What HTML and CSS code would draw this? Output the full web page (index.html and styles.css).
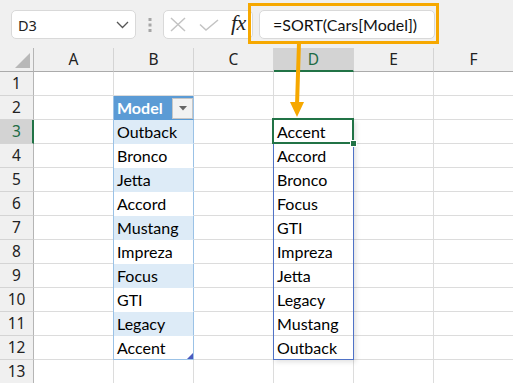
FILE: index.html
```html
<!DOCTYPE html>
<html>
<head>
<meta charset="utf-8">
<link rel="stylesheet" href="styles.css">
</head>
<body>
<div class="topbar">
  <div class="namebox">
    <span class="nb-text">D3</span>
    <svg class="chev" width="13" height="8" viewBox="0 0 13 8"><polyline points="1,1 6.5,6.5 12,1" fill="none" stroke="#555" stroke-width="1.3"/></svg>
  </div>
  <div class="sep">
    <svg width="4" height="16" viewBox="0 0 4 16"><rect x="0.5" y="1" width="3" height="3" fill="#a6a6a6"/><rect x="0.5" y="6.5" width="3" height="3" fill="#a6a6a6"/><rect x="0.5" y="12" width="3" height="3" fill="#a6a6a6"/></svg>
  </div>
  <div class="fbtns">
    <svg class="ico-x" width="16" height="15" viewBox="0 0 16 15"><path d="M1 1 L15 14 M15 1 L1 14" stroke="#c3c3c3" stroke-width="1.5" fill="none"/></svg>
    <svg class="ico-ok" width="20" height="12" viewBox="0 0 20 12"><path d="M1 5.5 L7 11 L19 1" stroke="#c3c3c3" stroke-width="1.5" fill="none"/></svg>
    <span class="fx">fx</span>
  </div>
  <div class="finput">=SORT(Cars[Model])</div>
  <div class="callout"></div>
</div>
<svg class="arrow" width="20" height="76" viewBox="0 0 20 76"><path d="M11 0 L9 62" stroke="#f6a800" stroke-width="4" fill="none"/><polygon points="2,59 16,59 9,74" fill="#f6a800"/></svg>

<div class="sheet">
  <div class="corner"><span class="tri"></span></div>
  <div class="ch">A</div><div class="ch">B</div><div class="ch">C</div><div class="ch sel">D</div><div class="ch">E</div><div class="ch">F</div>

  <div class="rh">1</div><div class="c"></div><div class="c"></div><div class="c"></div><div class="c"></div><div class="c"></div><div class="c"></div>
  <div class="rh">2</div><div class="c"></div><div class="c th"><span>Model</span><span class="dd"><svg width="8" height="5" viewBox="0 0 8 5"><polygon points="0,0 8,0 4,4.5" fill="#666"/></svg></span></div><div class="c"></div><div class="c"></div><div class="c"></div><div class="c"></div>
  <div class="rh sel">3</div><div class="c"></div><div class="c tb band">Outback</div><div class="c"></div><div class="c sp">Accent</div><div class="c"></div><div class="c"></div>
  <div class="rh">4</div><div class="c"></div><div class="c tb">Bronco</div><div class="c"></div><div class="c sp">Accord</div><div class="c"></div><div class="c"></div>
  <div class="rh">5</div><div class="c"></div><div class="c tb band">Jetta</div><div class="c"></div><div class="c sp">Bronco</div><div class="c"></div><div class="c"></div>
  <div class="rh">6</div><div class="c"></div><div class="c tb">Accord</div><div class="c"></div><div class="c sp">Focus</div><div class="c"></div><div class="c"></div>
  <div class="rh">7</div><div class="c"></div><div class="c tb band">Mustang</div><div class="c"></div><div class="c sp">GTI</div><div class="c"></div><div class="c"></div>
  <div class="rh">8</div><div class="c"></div><div class="c tb">Impreza</div><div class="c"></div><div class="c sp">Impreza</div><div class="c"></div><div class="c"></div>
  <div class="rh">9</div><div class="c"></div><div class="c tb band">Focus</div><div class="c"></div><div class="c sp">Jetta</div><div class="c"></div><div class="c"></div>
  <div class="rh">10</div><div class="c"></div><div class="c tb">GTI</div><div class="c"></div><div class="c sp">Legacy</div><div class="c"></div><div class="c"></div>
  <div class="rh">11</div><div class="c"></div><div class="c tb band">Legacy</div><div class="c"></div><div class="c sp">Mustang</div><div class="c"></div><div class="c"></div>
  <div class="rh">12</div><div class="c"></div><div class="c tb last">Accent</div><div class="c"></div><div class="c sp">Outback</div><div class="c"></div><div class="c"></div>
  <div class="rh">13</div><div class="c"></div><div class="c"></div><div class="c"></div><div class="c"></div><div class="c"></div><div class="c"></div>

  <div class="spill"></div>
  <div class="active"><span class="handle"></span></div>
</div>
</body>
</html>
```

FILE: styles.css
```css
* { box-sizing: border-box; }
html, body { margin: 0; padding: 0; }
body {
  width: 513px;
  height: 383px;
  overflow: hidden;
  background: #f0f0f0;
  position: relative;
  font-family: Lato, "Liberation Sans", sans-serif;
}

.topbar {
  height: 48px;
  display: flex;
  align-items: flex-start;
  padding: 10px 0 0 11px;
  position: relative;
}
.namebox {
  width: 125px;
  height: 29px;
  background: #fff;
  border: 1px solid #d9d9d9;
  border-radius: 5px;
  display: flex;
  align-items: center;
  justify-content: space-between;
  padding: 0 6px 0 6px;
  font-family: "Noto Sans", sans-serif;
  font-size: 14.5px;
  color: #222;
}
.chev { margin-top: 1px; }
.sep {
  width: 27px;
  height: 29px;
  display: flex;
  align-items: center;
  justify-content: center;
}
.fbtns {
  width: 90px;
  height: 29px;
  background: #fff;
  border: 1px solid #d9d9d9;
  border-radius: 5px;
  display: flex;
  align-items: center;
  padding-left: 6px;
}
.ico-x { margin-right: 13px; }
.ico-ok { margin-right: 12px; margin-top: 1px; }
.fx {
  font-family: "Liberation Serif", serif;
  font-style: italic;
  font-size: 22px;
  color: #222;
  letter-spacing: -0.5px;
  margin-top: -3px;
}
.finput {
  margin-left: 6px;
  width: 176px;
  height: 29px;
  background: #fff;
  border: 1px solid #d9d9d9;
  border-radius: 5px;
  padding-left: 13px;
  font-size: 16px;
  line-height: 27px;
  color: #111;
  white-space: nowrap;
}
.callout {
  position: absolute;
  left: 248px;
  top: 3px;
  width: 191px;
  height: 41px;
  border: 3px solid #f6a800;
}
.arrow {
  position: absolute;
  left: 288px;
  top: 43px;
  z-index: 5;
}

.sheet {
  display: grid;
  grid-template-columns: 34px repeat(6, 80px);
  grid-auto-rows: 24px;
  width: 514px;
  position: relative;
}
.corner {
  background: #f0f0f0;
  border-right: 1px solid #b5b5b5;
  border-bottom: 1px solid #ababab;
  position: relative;
}
.tri {
  position: absolute;
  right: 3px;
  bottom: 3px;
  width: 0;
  height: 0;
  border-left: 15px solid transparent;
  border-bottom: 15px solid #b8b8b8;
}
.ch {
  background: #f0f0f0;
  border-right: 1px solid #d4d4d4;
  border-bottom: 1px solid #ababab;
  text-align: center;
  font-family: "Noto Sans", sans-serif;
  font-size: 15.5px;
  line-height: 23px;
  color: #222;
}
.ch.sel {
  background: #d3d3d3;
  color: #1d6b45;
  border-bottom: 2px solid #217346;
  line-height: 22px;
}
.rh {
  background: #f0f0f0;
  border-right: 1px solid #b5b5b5;
  border-bottom: 1px solid #d4d4d4;
  text-align: center;
  font-family: "Noto Sans", sans-serif;
  font-size: 15.5px;
  line-height: 23px;
  color: #222;
}
.rh.sel {
  background: #d3d3d3;
  color: #1d6b45;
  border-right: 2px solid #217346;
  padding-left: 1px;
}
.c {
  background: #fff;
  border-right: 1px solid #dcdcdc;
  border-bottom: 1px solid #dcdcdc;
  font-size: 16px;
  line-height: 23px;
  padding-left: 3px;
  color: #000;
  white-space: nowrap;
  overflow: hidden;
}
.th {
  background: #5b9bd5;
  border-right-color: #9bc2e6;
  border-bottom-color: #5b9bd5;
  box-shadow: -1px 0 0 #9bc2e6;
  color: #fff;
  font-weight: bold;
  display: flex;
  justify-content: space-between;
  align-items: center;
  padding-right: 0;
  overflow: visible;
}
.th span:first-child { line-height: 23px; }
.dd {
  width: 21px;
  height: 21px;
  margin-top: 1px;
  background: #f2f2f2;
  border: 1px solid #c6c6c6;
  display: flex;
  align-items: center;
  justify-content: center;
}
.tb {
  border-right-color: #9bc2e6;
  border-bottom-color: #fff;
  box-shadow: -1px 0 0 #9bc2e6;
  overflow: visible;
}
.tb.band {
  background: #ddebf7;
  border-bottom-color: #ddebf7;
}
.tb.last {
  border-bottom-color: #9bc2e6;
  position: relative;
}
.tb.last::after {
  content: "";
  position: absolute;
  right: 0;
  bottom: 0;
  width: 0;
  height: 0;
  border-left: 6px solid transparent;
  border-bottom: 6px solid #4b5bbf;
}
.spill {
  position: absolute;
  left: 273px;
  top: 71px;
  width: 81px;
  height: 241px;
  border: 1px solid #4f72c6;
  box-shadow: 2px 2px 5px rgba(0,0,0,0.12);
}
.active {
  position: absolute;
  left: 272px;
  top: 70px;
  width: 82px;
  height: 26px;
  border: 2px solid #217346;
}
.handle {
  position: absolute;
  right: -5px;
  bottom: -5px;
  width: 7px;
  height: 7px;
  background: #217346;
  border: 1px solid #fff;
}
```
